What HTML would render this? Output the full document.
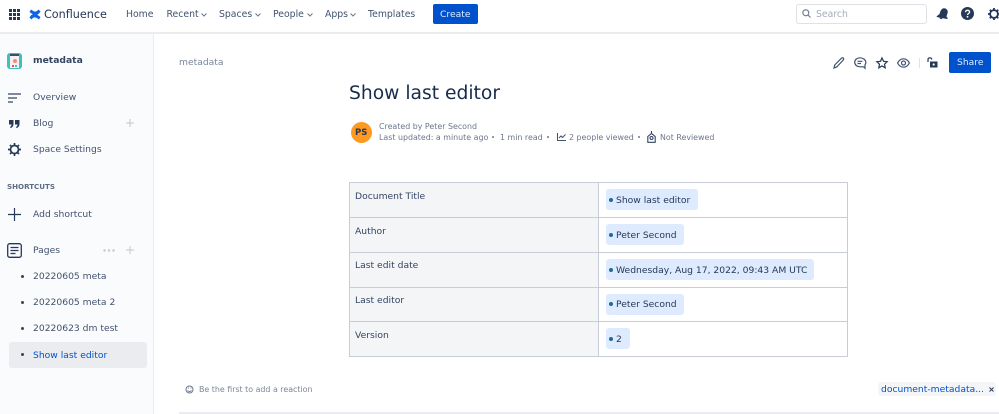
<!DOCTYPE html>
<html><head><meta charset="utf-8">
<style>
html,body{margin:0;padding:0;width:999px;height:414px;overflow:hidden;background:#fff;font-family:"DejaVu Sans","Liberation Sans",sans-serif;color:#42526e;font-size:9.2px}
#w{position:absolute;left:0;top:0;width:999px;height:414px;filter:blur(.3px);overflow:hidden}
.t{position:absolute;white-space:nowrap;line-height:14px;margin-top:1px}
.b{position:absolute}
svg{position:absolute;overflow:visible}
.nav{top:7px;font-size:9.3px;color:#42526e}
.side{left:33px;font-size:9.2px;color:#42526e}
.dot{position:absolute;left:21px;width:3px;height:3px;border-radius:50%;background:#344563}
.cellL{left:355px;color:#344563;font-size:9.2px}
.pill{position:absolute;left:606px;height:21px;background:#deebff;border-radius:3px}
.pd{position:absolute;left:609px;width:4px;height:4px;border-radius:50%;background:#1f6a96}
.pt{left:616px;color:#253858;font-size:9.2px}
.meta{font-size:7.9px;color:#6b778c;margin-top:0}
.ln{background:#c8ccd6}
</style></head><body><div id="w">
<!-- top bar -->
<div class="b" style="left:0;top:32px;width:999px;height:2px;background:#ebecf0"></div>
<svg style="left:9px;top:9px" width="11" height="11" fill="#253858"><rect x="0" y="0" width="3" height="3"/><rect x="4" y="0" width="3" height="3"/><rect x="8" y="0" width="3" height="3"/><rect x="0" y="4" width="3" height="3"/><rect x="4" y="4" width="3" height="3"/><rect x="8" y="4" width="3" height="3"/><rect x="0" y="8" width="3" height="3"/><rect x="4" y="8" width="3" height="3"/><rect x="8" y="8" width="3" height="3"/></svg>
<svg style="left:29px;top:9px" width="12" height="11"><path d="M0.5 8.500C3 4.500 5.500 3.500 11.500 8L10 10.500C6 7.500 4.500 8 2.500 10.500ZM11.500 2.500C9 6.500 6.500 7.500 0.500 3L2 0.500C6 3.500 7.500 3 9.500 0.500Z" fill="#0c66e4"/></svg>
<div class="t" style="left:44px;top:7px;font-size:11.200px;color:#253858">Confluence</div>
<div class="t nav" style="left:126px">Home</div>
<div class="t nav" style="left:166.500px">Recent</div>
<div class="t nav" style="left:219px">Spaces</div>
<div class="t nav" style="left:273px">People</div>
<div class="t nav" style="left:325px">Apps</div>
<div class="t nav" style="left:368px">Templates</div>
<svg style="left:201px;top:12.500px" width="6" height="4" fill="none" stroke="#6b778c" stroke-width="1"><path d="M.5 .5l2.500 2.500 2.500-2.500"/></svg>
<svg style="left:255px;top:12.500px" width="6" height="4" fill="none" stroke="#6b778c" stroke-width="1"><path d="M.5 .5l2.500 2.500 2.500-2.500"/></svg>
<svg style="left:307px;top:12.500px" width="6" height="4" fill="none" stroke="#6b778c" stroke-width="1"><path d="M.5 .5l2.500 2.500 2.500-2.500"/></svg>
<svg style="left:350px;top:12.500px" width="6" height="4" fill="none" stroke="#6b778c" stroke-width="1"><path d="M.5 .5l2.500 2.500 2.500-2.500"/></svg>
<div class="b" style="left:433px;top:4px;width:45px;height:20px;background:#0052cc;border-radius:2px"></div>
<div class="t" style="left:440px;top:7px;color:#deebff;font-size:9.200px">Create</div>
<!-- search -->
<div class="b" style="left:796px;top:4px;width:129px;height:18px;border:1px solid #dfe1e6;border-radius:3px;background:#fff"></div>
<svg style="left:802px;top:9px" width="9" height="9" fill="none" stroke="#6b778c" stroke-width="1.100"><circle cx="3.800" cy="3.800" r="3"/><path d="M6 6l2.500 2.500"/></svg>
<div class="t" style="left:816px;top:7px;color:#a5adba;font-size:9.300px">Search</div>
<svg style="left:936px;top:8px" width="13" height="12" fill="#253858"><path d="M1 8.500L3.500 6.500L4.500 3.500C5.500 1 8 0 10 1.300C12 2.700 12.300 5 11 7L10.500 9.500L12 10.500L11 11.500L.5 9.500Z" transform="translate(0 -.5)"/><path d="M3.500 9.500L6.500 10C6.200 11.500 4 11.500 3.500 9.500Z"/></svg>
<svg style="left:961px;top:7px" width="13" height="13"><circle cx="6.500" cy="6.500" r="6.500" fill="#253858"/><path d="M4.500 5.200C4.500 3.900 5.500 3.300 6.500 3.300C7.700 3.300 8.600 4 8.600 5.100C8.600 6.500 6.600 6.500 6.500 8" fill="none" stroke="#fff" stroke-width="1.300"/><circle cx="6.500" cy="9.800" r=".9" fill="#fff"/></svg>
<svg style="left:988px;top:8px" width="12" height="12" fill="none" stroke="#253858"><circle cx="6" cy="6" r="3.900" stroke-width="1.800"/><path d="M6 0v2M6 10v2M0 6h2M10 6h2M1.800 1.800l1.400 1.400M8.800 8.800l1.400 1.400M1.800 10.200l1.400-1.400M8.800 3.200l1.400-1.400" stroke-width="1.800"/></svg>
<!-- sidebar -->
<div class="b" style="left:0;top:34px;width:153px;height:380px;background:#fafbfc"></div>
<div class="b" style="left:153px;top:34px;width:1px;height:380px;background:#ebecf0"></div>
<div class="b" style="left:7px;top:53px;width:15px;height:16px;background:#3ebfc0;border-radius:3px"></div>
<div class="b" style="left:10px;top:54px;width:9px;height:14px;background:#fdeeee;border-top:2px solid #26547c;box-sizing:border-box"></div>
<div class="b" style="left:13px;top:59px;width:4px;height:4px;background:#f08a80;border-radius:50%"></div>
<div class="b" style="left:12px;top:65px;width:2px;height:2px;background:#e2574c"></div>
<div class="b" style="left:15px;top:65px;width:2px;height:2px;background:#3ebfc0"></div>
<div class="t" style="left:33px;top:53px;font-weight:bold;color:#344563;font-size:9.200px">metadata</div>
<svg style="left:8px;top:93px" width="13" height="9" stroke="#344563" stroke-width="1.200"><path d="M0 1h13M0 5h9M0 9h5"/></svg>
<div class="t side" style="top:90px">Overview</div>
<svg style="left:9px;top:120px" width="11" height="8" fill="#253858"><path d="M0 0h4.500v3.800C4.500 6 3.500 7.500 1.500 8L1 7C2 6.500 2.500 5.500 2.500 4.500H0ZM6 0h4.500v3.800C10.500 6 9.500 7.500 7.500 8L7 7C8 6.500 8.500 5.500 8.500 4.500H6Z"/></svg>
<div class="t side" style="top:116px">Blog</div>
<svg style="left:126px;top:119px" width="8" height="8" stroke="#c1c7d0" stroke-width="1"><path d="M4 0v8M0 4h8"/></svg>
<svg style="left:8px;top:143px" width="13" height="13" fill="none" stroke="#253858"><circle cx="6.500" cy="6.500" r="4" stroke-width="1.700"/><path d="M6.500 0v2M6.500 11v2M0 6.500h2M11 6.500h2M2 2l1.400 1.400M9.600 9.600L11 11M2 11l1.400-1.400M9.600 3.400L11 2" stroke-width="1.700"/></svg>
<div class="t side" style="top:142px">Space Settings</div>
<div class="t" style="left:7px;top:180px;font-size:7.100px;font-weight:bold;color:#5e6c84;margin-top:0">SHORTCUTS</div>
<svg style="left:8px;top:208px" width="13" height="13" stroke="#253858" stroke-width="1.200"><path d="M6.500 0v13M0 6.500h13"/></svg>
<div class="t side" style="top:207px">Add shortcut</div>
<svg style="left:7px;top:243px" width="15" height="15" fill="none" stroke="#253858" stroke-width="1.300"><rect x=".7" y=".7" width="13.600" height="13.600" rx="2"/><path d="M3.500 4.500h8M3.500 7.500h8M3.500 10.500h5"/></svg>
<div class="t side" style="top:243px">Pages</div>
<svg style="left:103px;top:249px" width="12" height="3" fill="#c1c7d0"><circle cx="1.500" cy="1.500" r="1.200"/><circle cx="6" cy="1.500" r="1.200"/><circle cx="10.500" cy="1.500" r="1.200"/></svg>
<svg style="left:126px;top:246px" width="8" height="8" stroke="#c1c7d0" stroke-width="1"><path d="M4 0v8M0 4h8"/></svg>
<div class="dot" style="top:275px"></div><div class="t side" style="top:269px">20220605 meta</div>
<div class="dot" style="top:301px"></div><div class="t side" style="top:295px">20220605 meta 2</div>
<div class="dot" style="top:327px"></div><div class="t side" style="top:321px">20220623 dm test</div>
<div class="b" style="left:9px;top:342px;width:138px;height:26px;background:#ebecf0;border-radius:3px"></div>
<div class="dot" style="top:353px"></div><div class="t side" style="top:348px;color:#0052cc">Show last editor</div>
<!-- header -->
<div class="t" style="left:179px;top:55px;color:#7a869a;font-size:9.200px">metadata</div>
<svg style="left:833px;top:57px" width="12" height="12" fill="none" stroke="#42526e" stroke-width="1.200"><path d="M1 11l.7-3L8.500 1.200c.6-.5 1.300-.5 1.800 0s.5 1.200 0 1.800L3.700 10z"/></svg>
<svg style="left:854px;top:57px" width="12" height="12" fill="none" stroke="#42526e" stroke-width="1.200"><path d="M6 .8C3 .8.700 2.800.700 5.300S3 9.800 6 9.800h3.500l1.500 1.400V8c.5-.8.800-1.700.8-2.700C11.800 2.800 9 .8 6 .8zM3.500 4.300h5M3.500 6.500h3.500"/></svg>
<svg style="left:876px;top:57px" width="12" height="12" fill="none" stroke="#253858" stroke-width="1.200"><path d="M6 1l1.500 3.300 3.700.4-2.700 2.500.7 3.600L6 9l-3.200 1.800.7-3.600L.800 4.700l3.700-.4z"/></svg>
<svg style="left:897px;top:58px" width="13" height="10" fill="none" stroke="#42526e" stroke-width="1.200"><path d="M.6 5C2 2.300 4 .8 6.500.8S11 2.300 12.400 5C11 7.700 9 9.200 6.500 9.200S2 7.700.6 5z"/><circle cx="6.500" cy="5" r="2"/></svg>
<div class="b" style="left:919px;top:58px;width:1px;height:10px;background:#dfe1e6"></div>
<svg style="left:927px;top:57px" width="11" height="11" fill="none" stroke="#253858" stroke-width="1.200"><path d="M1 5V2.500C1 .5 4.500 0 4.800 2.500"/><rect x="3" y="4.500" width="7.500" height="6" fill="#253858" stroke="none"/><circle cx="6.700" cy="7.500" r="1.100" fill="#fff" stroke="none"/></svg>
<div class="b" style="left:949px;top:52px;width:42px;height:21px;background:#0052cc;border-radius:2px"></div>
<div class="t" style="left:957px;top:55px;color:#deebff;font-size:9.200px">Share</div>
<!-- title -->
<div class="t" style="left:349px;top:80px;font-size:18.700px;line-height:27px;color:#172b4d;margin-top:0">Show last editor</div>
<div class="b" style="left:351px;top:122px;width:21px;height:21px;border-radius:50%;background:#ff991f"></div>
<div class="t" style="left:355px;top:125px;font-size:8.500px;font-weight:bold;color:#253858">PS</div>
<div class="t meta" style="left:379px;top:120px">Created by Peter Second</div>
<div class="t meta" style="left:379px;top:131px">Last updated: a minute ago</div>
<div class="b" style="left:492px;top:136px;width:2px;height:2px;border-radius:50%;background:#6b778c"></div>
<div class="t meta" style="left:500px;top:131px">1 min read</div>
<div class="b" style="left:547px;top:136px;width:2px;height:2px;border-radius:50%;background:#6b778c"></div>
<svg style="left:557px;top:133px" width="9" height="8" fill="none" stroke="#42526e" stroke-width="1"><path d="M.5 0v7.500H9M2 5l2-2 1.500 1.500L8.500 1.500"/></svg>
<div class="t meta" style="left:569px;top:131px">2 people viewed</div>
<div class="b" style="left:638px;top:136px;width:2px;height:2px;border-radius:50%;background:#6b778c"></div>
<svg style="left:647px;top:131px" width="9" height="12" fill="none" stroke="#344563" stroke-width="1.100"><path d="M.8 11.300h7.400V5.500L4.500 2.500.8 5.500zM4.500 0v2.500"/><circle cx="4.500" cy="7" r="1.500"/></svg>
<div class="t meta" style="left:660px;top:131px">Not Reviewed</div>
<!-- table -->
<div class="b" style="left:349px;top:182px;width:250px;height:175px;background:#f4f5f7"></div>
<div class="b ln" style="left:349px;top:182px;width:499px;height:1px"></div>
<div class="b ln" style="left:349px;top:217px;width:499px;height:1px"></div>
<div class="b ln" style="left:349px;top:252px;width:499px;height:1px"></div>
<div class="b ln" style="left:349px;top:287px;width:499px;height:1px"></div>
<div class="b ln" style="left:349px;top:321px;width:499px;height:1px"></div>
<div class="b ln" style="left:349px;top:356px;width:499px;height:1px"></div>
<div class="b ln" style="left:349px;top:182px;width:1px;height:175px"></div>
<div class="b ln" style="left:598px;top:182px;width:1px;height:175px"></div>
<div class="b ln" style="left:847px;top:182px;width:1px;height:175px"></div>
<div class="t cellL" style="top:189px">Document Title</div>
<div class="t cellL" style="top:224px">Author</div>
<div class="t cellL" style="top:258px">Last edit date</div>
<div class="t cellL" style="top:293px">Last editor</div>
<div class="t cellL" style="top:328px">Version</div>
<div class="pill" style="top:189px;width:92px"></div><div class="pd" style="top:198px"></div><div class="t pt" style="top:193px">Show last editor</div>
<div class="pill" style="top:224px;width:78px"></div><div class="pd" style="top:233px"></div><div class="t pt" style="top:228px">Peter Second</div>
<div class="pill" style="top:259px;width:208px"></div><div class="pd" style="top:268px"></div><div class="t pt" style="top:263px">Wednesday, Aug 17, 2022, 09:43 AM UTC</div>
<div class="pill" style="top:294px;width:78px"></div><div class="pd" style="top:302px"></div><div class="t pt" style="top:297px">Peter Second</div>
<div class="pill" style="top:328px;width:24px"></div><div class="pd" style="top:337px"></div><div class="t pt" style="top:332px">2</div>
<!-- footer -->
<svg style="left:185px;top:385px" width="9" height="9" fill="none" stroke="#6b778c" stroke-width="1"><circle cx="4.500" cy="4.500" r="3.500"/><path d="M2.500 5.500c1 1.300 3 1.300 4 0M3 3h.8M5.500 3h.8"/></svg>
<div class="t" style="left:199px;top:383px;font-size:7.900px;color:#7a869a;margin-top:0">Be the first to add a reaction</div>
<div class="b" style="left:878px;top:382px;width:118px;height:14px;background:#f4f5f7;border-radius:3px"></div>
<div class="t" style="left:881px;top:382px;font-size:9.200px;color:#0052cc">document-metadata...</div>
<svg style="left:989px;top:387px" width="5" height="5" stroke="#344563" stroke-width="1.100"><path d="M.5 .5l4 4M4.500 .5l-4 4"/></svg>
<div class="b" style="left:179px;top:412px;width:820px;height:2px;background:#ebecf0"></div>
</div></body></html>
